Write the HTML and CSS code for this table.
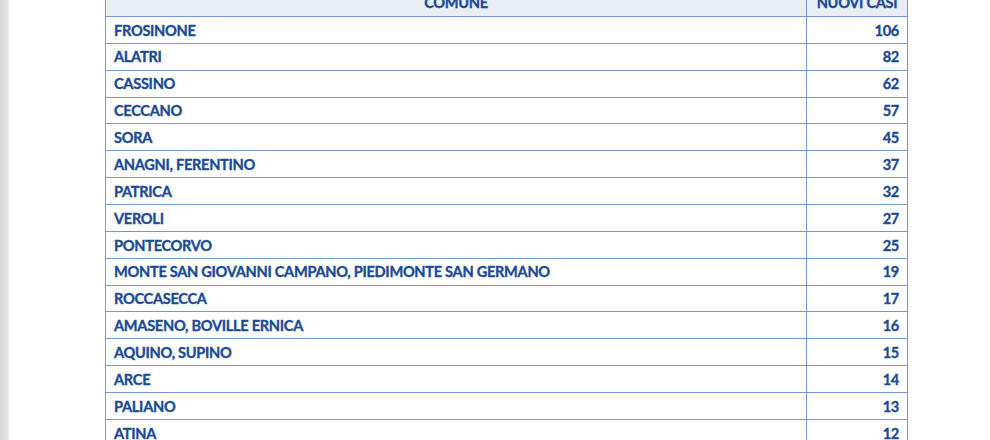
FILE: index.html
```html
<!DOCTYPE html>
<html lang="it">
<head>
<meta charset="utf-8">
<title>Nuovi casi per comune</title>
<link rel="stylesheet" href="styles.css">
</head>
<body>
<div class="page">
  <div class="edge"></div>
  <div class="sheet">
    <table class="cases">
      <thead>
        <tr><th class="c-name">COMUNE</th><th class="c-num">NUOVI CASI</th></tr>
      </thead>
      <tbody>
        <tr><td class="c-name">FROSINONE</td><td class="c-num">106</td></tr>
        <tr><td class="c-name">ALATRI</td><td class="c-num">82</td></tr>
        <tr><td class="c-name">CASSINO</td><td class="c-num">62</td></tr>
        <tr><td class="c-name">CECCANO</td><td class="c-num">57</td></tr>
        <tr><td class="c-name">SORA</td><td class="c-num">45</td></tr>
        <tr><td class="c-name">ANAGNI, FERENTINO</td><td class="c-num">37</td></tr>
        <tr><td class="c-name">PATRICA</td><td class="c-num">32</td></tr>
        <tr><td class="c-name">VEROLI</td><td class="c-num">27</td></tr>
        <tr><td class="c-name">PONTECORVO</td><td class="c-num">25</td></tr>
        <tr><td class="c-name">MONTE SAN GIOVANNI CAMPANO, PIEDIMONTE SAN GERMANO</td><td class="c-num">19</td></tr>
        <tr><td class="c-name">ROCCASECCA</td><td class="c-num">17</td></tr>
        <tr><td class="c-name">AMASENO, BOVILLE ERNICA</td><td class="c-num">16</td></tr>
        <tr><td class="c-name">AQUINO, SUPINO</td><td class="c-num">15</td></tr>
        <tr><td class="c-name">ARCE</td><td class="c-num">14</td></tr>
        <tr><td class="c-name">PALIANO</td><td class="c-num">13</td></tr>
        <tr><td class="c-name">ATINA</td><td class="c-num">12</td></tr>
      </tbody>
    </table>
  </div>
</div>
</body>
</html>
```
FILE: styles.css
```css
html, body {
  margin: 0;
  padding: 0;
  background: #ffffff;
  height: 100%;
  overflow: hidden;
}
.page {
  display: flex;
  height: 440px;
  overflow: hidden;
}
.edge {
  width: 9px;
  flex: none;
  background: linear-gradient(to right, #d6d6d6, #e9e9e9);
}
.sheet {
  flex: 1;
  padding-left: 96px;
}
.cases {
  border-collapse: collapse;
  width: 803px;
  margin-top: -11px;
  font-family: Lato, "Liberation Sans", sans-serif;
  font-weight: 700;
  font-size: 14.6px;
  letter-spacing: -0.3px;
  -webkit-text-stroke: 0.35px #1b4a97;
  color: #1b4a97;
  table-layout: fixed;
}
.cases th, .cases td {
  border: 1px solid #739ad0;
  padding: 2px 8px 0 8px;
  line-height: 1;
  white-space: nowrap;
  box-sizing: border-box;
}
.cases th {
  background: #e9edf5;
  text-align: center;
  height: 27px;
  padding-top: 1px;
}
.cases .c-name { width: 701px; }
.cases .c-num { width: 101px; }
.cases td.c-num { text-align: right; }
.cases tbody td { height: 26.87px; }
```
